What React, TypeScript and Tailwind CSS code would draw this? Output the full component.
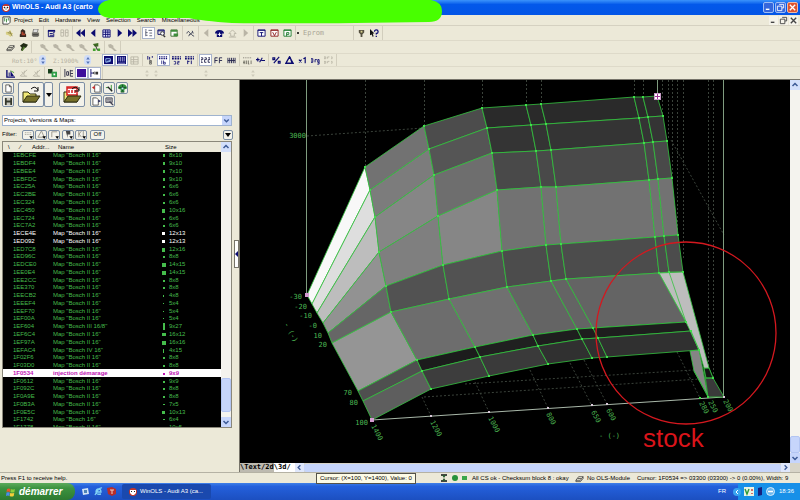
import type { ReactNode } from "react";
import clsx from "clsx";

type Point = [number, number];

const NAVY = "#0b0b70";
const GRAY = "#b9b5a6";

const icons: Record<string, ReactNode> = {
  stamp: <><path d="M1 3h4l1-2 1 3 2 1-3 4-2-2-3-1z" fill="#d8cf85" /><path d="M5 2l3 6M3 4l4 1" stroke="#8d8446" /></>,
  bust: <><path d="M2 9V6l1-1V2l2-2 3 2v3l1 1v3z" fill="#35261f" /><path d="M4 3h2v2h2v2H4z" fill="#b04630" /></>,
  printer: <><path d="M3 0h5L7 4H2z" fill="#ddd" stroke="#555" strokeWidth=".7" /><path d="M1 4h8v4H1z" fill="#77756c" /><path d="M2 6h6M2 8h6" stroke="#333" strokeWidth=".8" /></>,
  props: <><path d="M1 1h8v2H1z" fill={NAVY} /><path d="M1.5 2v6.5h6V5M3 5h3M3 7h4M6 5l3-2" stroke={NAVY} fill="none" /></>,
  panes: <path d="M1 1h3v7H1zM6 1h3v7H6zM1 4h3M6 4h3" stroke={GRAY} fill="none" />,
  first: <path d="M5 0v9L0 4.5zM10 0v9L5 4.5z" fill={NAVY} />,
  prev: <path d="M7 0v9L2 4.5z" fill={NAVY} />,
  grid: <><path d="M1 1h8v8H1z" fill="#e8e8ff" stroke={NAVY} /><path d="M4 1v8M6.5 1v8M1 3.5h8M1 6h8" stroke={NAVY} /></>,
  next: <path d="M3 0v9l5-4.5z" fill={NAVY} />,
  last: <path d="M0 0v9l5-4.5zM5 0v9l5-4.5z" fill={NAVY} />,
  tree: <path d="M1 1h2M2 2v6M2 4h2M2 7h2M5 1.5h4M6 4.5h3M6 7.5h3" stroke="#555a70" fill="none" />,
  find: <><path d="M1 1h7v5H1z" fill="#ddd" stroke={NAVY} /><path d="M1 2h7" stroke={NAVY} /><circle cx="6" cy="5" r="2" fill="#fff" stroke="#333" /><path d="M7 7l2 2" stroke="#333" strokeWidth="1.5" /></>,
  doc: <><path d="M1 1h7v7H1z" fill="#fff" stroke="#3c6d30" /><path d="M1 1h7v2H1zM4 5h5v3H4z" fill="#3f8e3a" /></>,
  curves: <path d="M1 5q1-4 3-1t3-1M3 8q1-4 3-2t3 2M7 2l1 3" stroke="#3b3f55" fill="none" />,
  prevOff: <path d="M7 0v9L2 4.5z" fill={GRAY} />,
  home: <><path d="M0 5q0-4 5-4t5 4H8v4H2V5z" fill={NAVY} /><path d="M3 6h4M5 4v4" stroke="#fff" /></>,
  homeOff: <path d="M1 5l4-4 4 4H7v3H3V5zM1 9h8" fill="none" stroke={GRAY} />,
  nextOff: <path d="M3 0v9l5-4.5z" fill={GRAY} />,
  boxT: <><path d="M1 1h8v7H1z" fill="#fff" stroke={NAVY} /><path d="M1 1.5h8M3 4h4M5 4v4" stroke={NAVY} /></>,
  boxV: <><path d="M1 1h8v7H1z" fill="#fff" stroke="#8c1e1e" /><path d="M1 1.5h8M3 3.5l2 4 2-4" stroke="#8c1e1e" fill="none" /></>,
  boxP: <><path d="M1 1h8v7H1z" fill="#fff" stroke="#1e7a2c" /><path d="M1 1.5h8M4 8V4h2.5v2H4" stroke="#1e7a2c" fill="none" /></>,
  lamp: <><path d="M2 1h6v3L6 6v3H4V6L2 4z" fill="#55513f" /><path d="M4 2h2v2H4z" fill="#d9d28c" /></>,
  help: <><path d="M0 0l5 5H3l1 3-1 1-1-3-2 1z" fill="#111" /><path d="M5 3q0-2 2-2t2 2-2 2v1M7 7.5V9" stroke={NAVY} strokeWidth="1.4" fill="none" /></>,
  eraser: <path d="M1 7l3-4h5L6 7zM1 7v1.5h5L9 5V3M3 5h4" stroke="#333" strokeWidth=".8" fill="none" />,
  wand: <><path d="M1 3l4-3 5 2-2 3-3 1-1 3-2-1 1-3z" fill="#222c16" /><path d="M3 8l2-4 2 1-3 4z" fill="#4f7a2c" /></>,
  tool: <path d="M0 2l3-1 3 2v2l4 4H7L4 6 1 5z" fill={GRAY} />,
  toolGo: <><path d="M1 1l6-1v4H3z" fill="#3d6b22" /><path d="M1 6h3v3H1zM6 6h3v3H6z" fill="#43a22f" /><path d="M4 3l2 5" stroke="#222" /></>,
  view3d: <><path d="M0 0h10v9H0z" fill={NAVY} /><path d="M2 7V3h5v3zM3 6l4-1" stroke="#9ec6f5" fill="none" /></>,
  view2d: <><path d="M0 0h10v9H0z" fill={NAVY} /><path d="M2 1v5M4 1v5M6 1v5M8 1v5M1 8h8" stroke="#c6c6f0" strokeWidth=".8" /></>,
  viewOff: <path d="M1 1h8v8H1zM1 4h8M1 6.5h8M4 1v8" stroke={GRAY} fill="none" />,
  bit8: <><path d="M2 0v4M4 1v3M7 0v2" stroke={NAVY} /><path d="M4 5h2v1.5H4zM4 7h2v2H4z" stroke="#333" strokeWidth=".7" fill="none" /></>,
  bit16: <><path d="M0 1h10M0 3h10" stroke={NAVY} strokeWidth="1.4" strokeDasharray="1.5 1" /><path d="M3 5v4M5 5v4h2V7H5" stroke={NAVY} strokeWidth=".8" fill="none" /></>,
  bit32: <><path d="M0 1h10M0 3h10" stroke={NAVY} strokeWidth="1.5" strokeDasharray="2 1" /><path d="M2 6h2v3H2M6 6h2v1H6v2h2" stroke={NAVY} strokeWidth=".8" fill="none" /></>,
  bitF: <><path d="M0 1h10M0 3h10" stroke={NAVY} strokeWidth="1.5" strokeDasharray="2 1" /><path d="M3 5v4M3 6h2M7 5v4" stroke={NAVY} fill="none" /></>,
  dec: <path d="M0 2h2v2H0v3h2M4 2h2v2H4v3h2M8 2h2v2H8v3h2" stroke="#26264e" fill="none" />,
  hex: <path d="M1 8V2h3M1 5h3M6 8V2h3M6 5h3" stroke="#26264e" fill="none" />,
  bin: <path d="M1 2v6M3 2v6M5 2v6M7 2v6M9 2v6M1 5h8" stroke="#26264e" fill="none" />,
  hilo: <><path d="M0 2h10" stroke="#77746a" strokeDasharray="1 1" /><path d="M0 5v4M2 5v4M0 7h2M4 5v4M6 5v4h1M9 5v4" stroke="#55534a" strokeWidth=".8" fill="none" /></>,
  sign: <path d="M0 4h4M2 2v4M4 7l3-5M6 5h4" stroke={NAVY} strokeWidth="1.2" />,
  percent: <path d="M1 2h2v2H1zM7 6h2v2H7zM8 1L2 8" stroke={NAVY} strokeWidth="1.3" fill="none" />,
  delta: <path d="M5 1L1 8h8zM5.5 1l2.500 7" stroke={NAVY} strokeWidth="1.5" fill="none" />,
  times: <path d="M1 4l3 3M4 4L1 7M6 3l2-1v6" stroke={NAVY} strokeWidth="1.3" fill="none" />,
  org: <path d="M0 3h2v4H0zM4.5 7V4h2M7.5 4H9v3H7.500zM9 7v2H7" stroke={NAVY} fill="none" />,
  orgOff: <path d="M0 1h2v2H0zM4 3V1h2M8 1h1v2H8M0 6h2v2H0zM4 8V6h2M8 6h1v2H8" stroke={GRAY} fill="none" />,
  chart: <><path d="M1 1v8h9" stroke={NAVY} strokeWidth="1.5" fill="none" /><path d="M3 8V4h1v4M5 8V2l4 6z" fill={NAVY} /><path d="M5 2l4 2" stroke="#4a9b2e" /></>,
  chartOff: <path d="M1 8l8-7M3 3l4 5M2 8h7M6 2v3" stroke={GRAY} fill="none" />,
  squares: <><path d="M0 0h5v5H0z" fill="#173f1b" /><path d="M4 3h6v6H4z" fill="#2e9e46" /><path d="M6 5h2v2H6z" fill="#fff" /></>,
  align: <path d="M1 0v9M3 3h2v4H3zM7 1v7M7 2h3M7 5h3M7 8h3" stroke="#2b2b45" fill="none" />,
  purple: <path d="M0 0h10v9H0z" fill="#3d0f9c" />,
  left: <><path d="M1 0v9M1 4.5h3" stroke={NAVY} /><path d="M3 4.5l2-2v4zM6 3h3v3H6z" fill="#333" /></>,
  newDoc: <path d="M2 1h4l2 2v6H2zM6 1v2h2" fill="#fff" stroke="#333" strokeWidth=".8" />,
  save: <><path d="M1 1h8v8H1z" fill="#35382c" /><path d="M3 1h4v3H3zM3 6h4v3H3z" fill="#c8c8c0" /></>,
  docBack: <><path d="M3 1h4l2 2v6H3z" fill="#fff" stroke="#333" strokeWidth=".8" /><path d="M0 4l3-2v4z" fill="#c22" /></>,
  pen: <><path d="M1 4h3M7 1v7" stroke="#2e8c2e" /><path d="M3 3l5 5" stroke="#222" strokeWidth="1.5" /></>,
  globe: <><path d="M0 5q0-4 5-5 5 1 5 5l-3 1v3H3V6z" fill="#2f8f3e" /><path d="M1 4h8M5 1v7M3 9h4" stroke="#164c28" /><path d="M4 4h2v2H4z" fill="#bfe8ff" /></>,
  docNext: <><path d="M1 1h4l2 2v6H1z" fill="#fff" stroke="#333" strokeWidth=".8" /><path d="M7 6l3-1.5L7 3z" fill="#225" /></>,
  db: <><path d="M1 1h7v5H1z" fill="#ccc" stroke="#445" /><path d="M2 2.5h5M2 4.5h5" stroke="#445" strokeWidth=".7" /><path d="M5 5l4 4" stroke="#445" strokeWidth="1.5" /></>,
  minus: <path d="M2 7h4" stroke="currentColor" strokeWidth="1.5" />,
  restore: <path d="M3.5 1.5h5v4h-2M1.5 3.5h5v5h-5z" stroke="currentColor" fill="none" />,
  close: <path d="M2 2l6 6M8 2L2 8" stroke="currentColor" strokeWidth="1.5" />,
  up: <path d="M2.5 6L5 3.500 7.500 6" stroke="#3d5a96" strokeWidth="1.5" fill="none" />,
  down: <path d="M2.5 4L5 6.500 7.500 4" stroke="#3d5a96" strokeWidth="1.5" fill="none" />,
  chevL: <path d="M6 2.5L3.500 5 6 7.500" stroke="#3d5a96" strokeWidth="1.5" fill="none" />,
  chevR: <path d="M4 2.5L6.500 5 4 7.500" stroke="#3d5a96" strokeWidth="1.5" fill="none" />,
};

const Icon = ({ name, className }: { name: string; className?: string }) => (
  <svg viewBox="0 0 10 10" className={clsx("shrink-0", className ?? "size-[9px]")} aria-hidden="true">
    {icons[name]}
  </svg>
);

const ToolGroup = ({ names, pressed = [] }: { names: string[]; pressed?: string[] }) => (
  <div className="flex h-full items-center border-r border-[#d2cebd] px-px">
    {names.map((name, i) => (
      <button
        key={i}
        aria-label={name}
        className={clsx(
          "flex h-[12px] w-[13px] items-center justify-center",
          pressed.includes(name) && "border border-[#a9b4cc] bg-white"
        )}
      >
        <Icon name={name} />
      </button>
    ))}
  </div>
);

const Spinner = ({ faint }: { faint?: boolean }) => (
  <button
    aria-label="Step"
    className={clsx("flex h-[10px] w-[7px] items-center justify-center rounded-sm", faint ? "opacity-60" : "bg-[#cfdcf8]")}
  >
    <svg viewBox="0 0 6 10" className="h-[9px] w-[6px]">
      <path d="M1 4l2-3 2 3zM1 6l2 3 2-3z" fill={faint ? "#bbb7a6" : "#5573b5"} />
    </svg>
  </button>
);

const menus = ["Project", "Edit", "Hardware", "View", "Selection", "Search", "Miscellaneous"];

const TitleBar = () => (
  <header className="relative">
    <div className="flex h-[15px] items-center bg-linear-to-b from-[#3b93fb] via-[#0358ea] via-30% to-[#0355e6] px-[2px] text-white">
      <svg viewBox="0 0 8 8" className="size-[8px]">
        <circle cx="4" cy="4" r="4" fill="#c3392d" />
        <path d="M1 2h6v3L5 7H3L1 5z" fill="#fff" />
        <path d="M2 3h1v1H2zM5 3h1v1H5zM3 5h2" fill="#222" stroke="#222" strokeWidth=".5" />
      </svg>
      <h1 className="ml-[2px] flex-1 text-[7px] font-bold">WinOLS - Audi A3 (carto</h1>
      <div className="flex gap-px">
        <button aria-label="Minimize" className="rounded-xs border border-[#9dbdf5] bg-[#3667dc]"><Icon name="minus" /></button>
        <button aria-label="Restore" className="rounded-xs border border-[#9dbdf5] bg-[#3667dc]"><Icon name="restore" /></button>
        <button aria-label="Close" className="rounded-xs border border-[#f0b9a5] bg-[#dd5430]"><Icon name="close" /></button>
      </div>
    </div>
    <nav className="flex h-[11px] items-center border-b border-[#d5d1c1] px-[2px]">
      <svg viewBox="0 0 10 10" className="size-[9px]">
        <path d="M1 1h8v6L7 9H1z" fill="#fff" stroke="#333" />
        <path d="M3 2v4M5 3v4M7 2v3" stroke="#3a8a3c" />
      </svg>
      <ul className="ml-[3px] flex flex-1 gap-[6px] text-[6px]">
        {menus.map((m) => (
          <li key={m}><button>{m}</button></li>
        ))}
      </ul>
      <div className="flex gap-px text-[#444]">
        <button aria-label="Minimize map" className="bg-[#f5f3ea]"><Icon name="minus" /></button>
        <button aria-label="Restore map" className="bg-[#f5f3ea]"><Icon name="restore" /></button>
        <button aria-label="Close map" className="bg-[#f5f3ea]"><Icon name="close" /></button>
      </div>
    </nav>
    <svg viewBox="0 0 346 24" className="absolute top-0 left-[97px] h-[24px] w-[346px]">
      <path d="M12 0H334Q345 2 345 11Q345 22 332 22Q215 24 135 23Q105 21 92 18L12 18Q1 16 1 9Q2 2 12 0z" fill="#48ff00" />
    </svg>
  </header>
);

const Toolbars = () => (
  <div className="border-b border-[#77746a]">
    <div className="flex h-[14px] items-center pl-[2px]">
      <ToolGroup names={["stamp", "bust", "printer"]} />
      <ToolGroup names={["props", "panes"]} />
      <ToolGroup names={["first", "prev", "grid", "next", "last"]} />
      <ToolGroup names={["tree", "find", "doc"]} pressed={["tree"]} />
      <ToolGroup names={["curves"]} />
      <ToolGroup names={["prevOff", "home", "homeOff", "nextOff"]} />
      <ToolGroup names={["boxT", "boxV", "boxP"]} />
      <span className="mx-px size-[2px] rounded-full bg-black" />
      <span className="ml-[3px] w-[50px] font-['DejaVu_Sans_Mono',monospace] text-[7px] text-[#aaa696]">Eprom</span>
      <div className="h-full border-l border-[#d2cebd]"><ToolGroup names={["lamp", "help"]} /></div>
    </div>
    <div className="flex h-[13px] items-center border-t border-[#dedac9] pl-[3px]">
      <ToolGroup names={["eraser", "wand"]} />
      <div className="ml-[5px] flex h-full"><ToolGroup names={["tool", "tool", "tool", "tool", "toolGo"]} /></div>
      <ToolGroup names={["tool"]} />
    </div>
    <div className="flex h-[13px] items-center border-t border-[#dedac9] pl-[3px]">
      <div className="flex w-[98px] items-center pl-[9px] font-['DejaVu_Sans_Mono',monospace] text-[6px] text-[#b5b1a1]">
        <span className="w-[27px]">Rot:10°</span>
        <Spinner />
        <span className="ml-[7px] w-[31px]">Z:1900%</span>
        <Spinner />
      </div>
      <ToolGroup names={["view3d", "view2d", "viewOff"]} pressed={["view3d", "view2d"]} />
      <ToolGroup names={["bit8", "bit16", "bit32", "bitF"]} pressed={["bit16"]} />
      <ToolGroup names={["dec", "hex", "bin"]} pressed={["dec"]} />
      <ToolGroup names={["hilo", "sign"]} />
      <ToolGroup names={["percent", "delta", "times", "org", "orgOff"]} />
    </div>
    <div className="flex h-[13px] items-center border-t border-[#dedac9] pl-[3px]">
      <ToolGroup names={["chart", "chartOff", "chartOff"]} />
      <ToolGroup names={["squares"]} />
      <ToolGroup names={["align", "purple", "left"]} pressed={["purple", "left"]} />
      <div className="ml-[40px] flex gap-[2px]"><Spinner faint /><Spinner faint /></div>
      <div className="ml-[43px]"><Spinner faint /></div>
      <div className="ml-[40px]"><Spinner faint /></div>
    </div>
  </div>
);

// address, name, size; the marker dimensions follow the size column
const maps: [string, string, string][] = [
  ["1EBCFE", 'Map "Bosch II 16"', "8x10"],
  ["1EBDF4", 'Map "Bosch II 16"', "9x10"],
  ["1EBEE4", 'Map "Bosch II 16"', "7x10"],
  ["1EBFDC", 'Map "Bosch II 16"', "9x10"],
  ["1EC25A", 'Map "Bosch II 16"', "6x6"],
  ["1EC2BE", 'Map "Bosch II 16"', "6x6"],
  ["1EC324", 'Map "Bosch II 16"', "6x6"],
  ["1EC450", 'Map "Bosch II 16"', "10x16"],
  ["1EC724", 'Map "Bosch II 16"', "6x6"],
  ["1EC7A2", 'Map "Bosch II 16"', "6x6"],
  ["1ECE4E", 'Map "Bosch II 16"', "12x13"],
  ["1ED092", 'Map "Bosch II 16"', "12x13"],
  ["1ED7C8", 'Map "Bosch II 16"', "12x16"],
  ["1ED96C", 'Map "Bosch II 16"', "8x8"],
  ["1EDCE0", 'Map "Bosch II 16"', "14x15"],
  ["1EE0E4", 'Map "Bosch II 16"', "14x15"],
  ["1EE2CC", 'Map "Bosch II 16"', "8x8"],
  ["1EE370", 'Map "Bosch II 16"', "8x8"],
  ["1EECB2", 'Map "Bosch II 16"', "4x8"],
  ["1EEEF4", 'Map "Bosch II 16"', "5x4"],
  ["1EEF70", 'Map "Bosch II 16"', "5x4"],
  ["1EF00A", 'Map "Bosch II 16"', "5x4"],
  ["1EF604", 'Map "Bosch III 16/8"', "9x27"],
  ["1EF6C4", 'Map "Bosch II 16"', "16x12"],
  ["1EF97A", 'Map "Bosch II 16"', "16x16"],
  ["1EFAC4", 'Map "Bosch IV 16"', "4x15"],
  ["1F02F6", 'Map "Bosch II 16"', "8x8"],
  ["1F03D0", 'Map "Bosch II 16"', "8x8"],
  ["1F0534", "injection démarage", "9x9"],
  ["1F0612", 'Map "Bosch II 16"', "9x9"],
  ["1F092C", 'Map "Bosch II 16"', "8x8"],
  ["1F0A9E", 'Map "Bosch II 16"', "8x8"],
  ["1F0B3A", 'Map "Bosch II 16"', "7x5"],
  ["1F0E5C", 'Map "Bosch II 16"', "10x13"],
  ["1F1742", 'Map "Bosch 16"', "6x4"],
  ["1F1778", 'Map "Bosch II 16"', "10x5"],
];

const SizeMark = ({ size }: { size: string }) => {
  const [w, h] = size.split("x").map((n) => Math.max(1, Math.round(Number(n) / 4)));
  return (
    <svg viewBox="0 0 6 7" className="h-[7px] w-[6px]">
      <rect x={Math.floor(3 - w / 2)} y={Math.floor(4 - h / 2)} width={w} height={h} fill="currentColor" />
    </svg>
  );
};

const MapTable = () => (
  <div className="mx-[2px] mb-[44px] flex min-h-0 flex-1 border border-[#8a877a]">
    <div className="min-w-0 flex-1 overflow-hidden bg-black">
      <table className="h-[290px] w-full table-fixed text-left text-[6px] leading-[7px]">
        <thead>
          <tr className="h-[10px] bg-[#ebe8d9] text-black">
            <th className="w-[50px] pl-[5px] font-normal whitespace-pre">\      ⁄       Addr...</th>
            <th className="w-[108px] pl-[5px] font-normal">Name</th>
            <th className="pl-[4px] font-normal">Size</th>
          </tr>
        </thead>
        <tbody>
          {maps.map(([address, name, size], i) => (
            <tr
              key={address}
              className={clsx(
                i === 28 ? "bg-white font-bold text-[#c014b4]" : i === 10 || i === 11 ? "text-white" : "text-[#45bd4c]"
              )}
            >
              <td className="p-0 pl-[10px]">{address}</td>
              <td className="p-0 whitespace-nowrap">{name}</td>
              <td className="p-0">
                <span className="flex items-center gap-[2px]"><SizeMark size={size} />{size}</span>
              </td>
            </tr>
          ))}
        </tbody>
      </table>
    </div>
    <div className="flex w-[10px] flex-col bg-[#f4f3ee]">
      <button aria-label="Scroll up" className="bg-[#d3dffb]"><Icon name="up" className="size-[10px]" /></button>
      <div className="mt-auto h-[34px] rounded-xs border border-[#b3c5f2] bg-[#c6d5fb]" />
      <button aria-label="Scroll down" className="mt-[5px] bg-[#c6d5fb]"><Icon name="down" className="size-[10px]" /></button>
    </div>
  </div>
);

const FolderIcon = ({ red }: { red?: boolean }) => (
  <svg viewBox="0 0 20 20" className="size-[20px]">
    <path d="M2 7h5l2 2h6v8H2z" fill="#f0e878" stroke="#2c2c10" />
    {red && <path d="M5 2h10v8H5z" fill="#fff" stroke="#d42020" strokeWidth="1.5" />}
    {red && <path d="M5 3h10M7 8V5M10 8V5M13 8V5" stroke="#d42020" strokeWidth="1.5" />}
    <path d="M2 17l4-6h13l-4 6z" fill="#77712a" stroke="#2c2c10" />
    <path d="M10 4q4-4 7 1M17 2v4h-4" fill="none" stroke="#111" />
  </svg>
);

const boxButton = "flex items-center justify-center rounded-xs border border-[#7d8fa5] bg-[#f3f2ea]";

const SmallButton = ({ name }: { name: string }) => (
  <button aria-label={name} className={clsx(boxButton, "size-[12px]")}>
    <Icon name={name} />
  </button>
);

const filters = [
  <path key="0" d="M1 3h8M1 5h8" stroke="#99968a" strokeDasharray="1 1" />,
  <path key="1" d="M5 1L1 8h7z" stroke="#99968a" fill="none" />,
  <path key="2" d="M2 8V2h6" stroke="#99968a" fill="none" />,
  <path key="3" d="M2 1h5v4H4v4" fill="#444" />,
  <path key="4" d="M2 1v7M2 5l3-4M2 4l3 4M7 1v7" stroke="#99968a" fill="none" />,
];

const ProjectPanel = () => (
  <aside className="flex w-[234px] shrink-0 flex-col">
    <div className="flex h-[32px] items-start gap-[4px] pt-[2px] pl-[2px]">
      <div className="flex flex-col gap-px"><SmallButton name="newDoc" /><SmallButton name="save" /></div>
      <div className="flex">
        <button aria-label="Open project" className={clsx(boxButton, "h-[25px] w-[26px]")}><FolderIcon /></button>
        <button aria-label="Recent projects" className={clsx(boxButton, "h-[25px] w-[9px]")}>
          <svg viewBox="0 0 6 4" className="h-[4px] w-[6px]"><path d="M0 0h6L3 4z" /></svg>
        </button>
      </div>
      <button aria-label="Open map pack" className={clsx(boxButton, "ml-[2px] h-[25px] w-[26px]")}><FolderIcon red /></button>
      <div className="ml-px grid grid-cols-3 gap-px">
        <SmallButton name="docBack" /><SmallButton name="pen" /><SmallButton name="globe" />
        <SmallButton name="docNext" /><SmallButton name="db" />
      </div>
    </div>
    <div className="relative mx-[2px] mt-[3px] flex h-[11px] shrink-0">
      <select aria-label="View" className="block h-[11px] w-full appearance-none border border-[#9fb3cf] bg-white pl-px text-[6px] leading-[9px]">
        <option>Projects, Versions &amp; Maps:</option>
      </select>
      <span className="pointer-events-none absolute top-px right-px bg-[#c6d5fb]"><Icon name="down" /></span>
    </div>
    <div className="mt-[2px] flex h-[13px] items-center gap-px pl-[2px] text-[6px]">
      <span className="w-[19px]">Filter:</span>
      {filters.map((shape, i) => (
        <button key={i} aria-label={`Filter ${i + 1}`} className={clsx(boxButton, "h-[10px] w-[12px]", i === 3 && "ml-px")}>
          <svg viewBox="0 0 10 10" className="size-[9px]">{shape}<path d="M6 7h4l-2 3z" /></svg>
        </button>
      ))}
      <button className={clsx(boxButton, "ml-[2px] h-[10px] w-[15px]")}>Off</button>
      <button aria-label="More filters" className={clsx(boxButton, "mr-px ml-auto size-[10px]")}>
        <svg viewBox="0 0 6 4" className="h-[4px] w-[6px]"><path d="M0 0h6L3 4z" /></svg>
      </button>
    </div>
    <MapTable />
  </aside>
);

// mesh vertices, one line per row of the map (y axis), one entry per column (x axis)
const mesh: Point[][] = [
  [[307, 295], [365, 167], [424, 126], [482, 108], [526, 105], [541, 104], [634, 97], [643, 97], [657, 96]],
  [[312, 304], [370, 190], [429, 149], [487, 128], [531, 125], [546, 124], [639, 118], [648, 117], [663, 116]],
  [[317, 313], [375, 217], [434, 175], [492, 153], [536, 151], [551, 150], [644, 143], [653, 142], [667, 141]],
  [[323, 323], [379, 252], [438, 216], [497, 190], [541, 187], [556, 187], [649, 180], [658, 179], [672, 178]],
  [[328, 333], [386, 286], [443, 265], [502, 251], [546, 245], [561, 244], [655, 237], [664, 236], [678, 235]],
  [[332, 343], [391, 312], [449, 299], [507, 287], [551, 281], [566, 279], [659, 273], [669, 272], [683, 272]],
  [[358, 391], [417, 360], [475, 347], [533, 335], [577, 329], [593, 328], [686, 322]],
  [[363, 401], [422, 371], [480, 357], [538, 346], [582, 339], [598, 338], [691, 331]],
  [[372, 420], [431, 389], [489, 376], [548, 364], [592, 358], [607, 357], [699, 350]],
];

const shades = [
  ["#f8f8f8", "#727272", "#4c4c4c", "#2a2a2a"],
  ["#dedede", "#7c7c7c", "#555555", "#343434"],
  ["#bdbdbd", "#868686", "#6e6e6e", "#494949"],
  ["#929292", "#7f7f7f", "#868686", "#727272"],
  ["#666666", "#525252", "#525252", "#4c4c4c"],
  ["#959595", "#6d6d6d", "#707070", "#646464"],
  ["#4f4f4f", "#1c1c1c", "#202020", "#1e1e1e"],
  ["#5e5e5e", "#3d3d3d", "#3a3a3a", "#303030"],
];

const toPoints = (pts: Point[]) => pts.map((p) => p.join(",")).join(" ");

const rowLabels: [string, number, number][] = [
  ["-30", 302, 299], ["-20", 307, 309], ["-10", 312, 318], ["-0", 317, 328], ["10", 322, 338],
  ["20", 327, 347], ["70", 352, 395], ["80", 358, 405], ["100", 368, 425],
];

const columnLabels: [string, number, number][] = [
  ["1400", 371, 426], ["1200", 430, 422], ["1000", 488, 418], ["800", 546, 414],
  ["650", 591, 412], ["600", 606, 410], ["280", 699, 403], ["250", 708, 402], ["200", 723, 401],
];

const MapChart = () => (
  <svg viewBox="240 80 550 383" className="min-h-0 w-full flex-1 bg-black" role="img" aria-label="3d view of the map">
    <g stroke="#3a423a" strokeDasharray="2 2" fill="none">
      <path d="M365.5 80V166M424.5 80V126M482.5 80V108M526.5 80V105M541.5 80V104M634.5 80V97M643.5 80V97" />
      <path d="M662.5 80V116M668.5 80V140M672.5 80V178M677.5 80V235M683.5 80V260M708.5 80V368M713.5 80V377" />
      <path d="M307 136L424 128M671 140L724 235" />
      <path d="M424 397L700 379M465 384L694 370M422 397L431 416M475 382L489 412M530 370L548 408M570 363L592 406M584 360L607 404M677 352L700 398" />
    </g>
    <g stroke="#7f9c7f" fill="none">
      <path d="M306.5 80V295M657.5 80V96M723.5 80V397" />
      <path d="M372 420L724 397" stroke="#a9b8a9" />
    </g>
    <g stroke="#35c440" strokeWidth=".8" strokeLinejoin="round">
      {shades.map((row, i) =>
        mesh[i].slice(1).map((_, j) => {
          const below = mesh[i + 1];
          if (!below[j + 1]) return null;
          return (
            <polygon
              key={`${i}-${j}`}
              points={toPoints([mesh[i][j], mesh[i][j + 1], below[j + 1], below[j]])}
              fill={row[Math.min(j, 3)]}
            />
          );
        })
      )}
      <polygon points="690,351 699,350 708,396 694,371" fill="#858585" />
      <polygon points="704,368 709,368 713,378 724,397 708,397" fill="#3a3a3a" />
      <polygon points="704,368 709,368 713,378 706,378" fill="#151515" />
      <polygon points="659,273 683,272 709,368 704,368 699,350 686,322" fill="#bdbdbd" />
      <path d="M669 272L686 322M691 331L699 350M706 378L713 378M694 371L708 397" fill="none" />
    </g>
    <g fill="#3fe04a">
      {mesh.flatMap((row, i) =>
        row.slice(1).map(([x, y], j) => <rect key={`${i}-${j}`} x={x - 1} y={y - 1} width="2" height="2" />)
      )}
      {[[708, 397], [700, 398], [713, 378]].map(([x, y]) => (
        <rect key={x} x={x - 1} y={y - 1} width="2" height="2" />
      ))}
    </g>
    <g fill="#d9c9d9">
      {[[431, 416], [489, 412], [548, 408], [592, 405], [607, 404], [724, 397]].map(([x, y]) => (
        <rect key={x} x={x - 1} y={y - 1} width="2" height="2" />
      ))}
    </g>
    <path d="M305 293h4v4h-4zM370 418h4v4h-4z" fill="#d49bd0" />
    <rect x="654.5" y="93.5" width="6" height="6" fill="#fff" stroke="#c79ac7" />
    <path d="M657.5 94v5M655 96.5h5" stroke="#a03398" />
    <g fill="#4db853" className="font-['DejaVu_Sans_Mono',monospace] text-[7px]">
      <text x="306" y="138" textAnchor="end">3000</text>
      {rowLabels.map(([text, x, y]) => (
        <text key={text} x={x} y={y} textAnchor="end">{text}</text>
      ))}
      {columnLabels.map(([text, x, y]) => (
        <text key={text} transform={`translate(${x} ${y}) rotate(62)`}>{text}</text>
      ))}
      <text x="599" y="438">- (-)</text>
      <text transform="translate(284 324) rotate(62)">- (-)</text>
    </g>
    <ellipse cx="686" cy="333" rx="90" ry="91" fill="none" stroke="#d4181f" strokeWidth="1.3" />
    <text x="643" y="447" fill="#d9141a" className="text-[26px]">stock</text>
  </svg>
);

const ChartPane = () => (
  <main className="flex min-w-0 flex-1 flex-col">
    <div className="flex min-h-0 flex-1">
      <div className="flex min-w-0 flex-1 flex-col"><MapChart /></div>
      <div className="flex w-[10px] flex-col bg-[#f4f3ee]">
        <button aria-label="Scroll chart up" className="bg-[#d3dffb]"><Icon name="up" className="size-[10px]" /></button>
        <div className="mt-auto h-[17px] rounded-xs border border-[#b3c5f2] bg-[#c6d5fb]" />
        <button aria-label="Scroll chart down" className="bg-[#c6d5fb]"><Icon name="down" className="size-[10px]" /></button>
      </div>
    </div>
    <div className="flex h-[9px] items-center bg-[#d8d5c8]">
      <div role="tablist" className="flex h-full w-[55px] bg-[#bdbab0] font-['DejaVu_Sans_Mono',monospace] text-[7px] leading-[9px] font-bold">
        <button role="tab">\Text</button>
        <button role="tab">/2d</button>
        <button role="tab" aria-selected="true" className="flex-1 bg-white text-left">\3d/</button>
      </div>
      <button aria-label="Scroll left" className="bg-[#dfe7fb]"><Icon name="chevL" /></button>
      <div className="h-[8px] flex-1 rounded-xs bg-[#c6d5fb]" />
      <button aria-label="Scroll right" className="mr-[10px] bg-[#dfe7fb]"><Icon name="chevR" /></button>
    </div>
  </main>
);

const StatusBar = () => (
  <div className="relative flex h-[11px] shrink-0 items-center border-t border-[#b5b2a4] pr-[5px] pl-px text-[6px] whitespace-nowrap">
    <span className="flex-1">Press F1 to receive help.</span>
    <svg viewBox="0 0 28 8" className="mr-[3px] h-[8px] w-[28px]">
      <path d="M0 1h6M0 7h6" stroke="#111" strokeWidth="1.5" />
      <path d="M1 1h4L3 4l2 3H1l2-3z" fill="#2a5a30" />
      <circle cx="14" cy="4" r="3" fill="#26913a" />
      <path d="M21 2h5v4h-5z" fill="#3aa64a" />
    </svg>
    <span className="w-[103px]">All CS ok - Checksum block 8 : okay</span>
    <Icon name="eraser" />
    <span className="ml-[3px] w-[50px]">No OLS-Module</span>
    <span className="w-[158px]">Cursor: 1F0534 =&gt; 03300 (03300) -&gt; 0 (0.00%), Width: 9</span>
    <div role="tooltip" className="absolute top-0 left-[316px] border border-[#55534a] bg-[#fdfbe6] px-[3px] leading-[9px]">
      Cursor: (X=100, Y=1400), Value: 0
    </div>
  </div>
);

const Taskbar = () => (
  <footer className="flex h-[17px] shrink-0 items-stretch bg-linear-to-b from-[#3f7fe8] via-[#2460dc] via-20% to-[#1c4fc0] text-white">
    <button className="flex w-[75px] items-center gap-[3px] rounded-r-lg bg-linear-to-b from-[#5cab5c] via-[#3c9340] via-30% to-[#2d7a31] pl-[6px] text-[10px] font-bold italic">
      <svg viewBox="0 0 10 10" className="size-[10px]">
        <path d="M1 2q2-1 3.500 0L4 5Q2 4 .5 5z" fill="#e8562c" />
        <path d="M5 2q2 1 4 0l-.6 3q-2 1-4 0z" fill="#8ccf3c" />
        <path d="M.5 5.6Q2 5 3.800 5.600L3.300 9Q2 8 0 9z" fill="#4b8cf0" />
        <path d="M4.3 5.7q2 1 4 0L7.700 9q-2 1-4 0z" fill="#f5cf3a" />
      </svg>
      démarrer
    </button>
    <div className="flex w-[47px] items-center gap-[4px] pl-[6px]">
      <svg viewBox="0 0 9 9" className="size-[9px]"><path d="M1 2l6-1 1 6-6 1z" fill="#cfe2f5" /><path d="M3 3h3v3H3z" fill="#4d84b8" /></svg>
      <svg viewBox="0 0 9 9" className="size-[9px]"><path d="M2 5h5Q7 2 4.500 2T2 5q0 3 5 2M1 8Q5 0 8 1" stroke="#7fd0f5" strokeWidth="1.3" fill="none" /></svg>
      <svg viewBox="0 0 9 9" className="size-[9px]"><path d="M0 1l5-1 4 2v5L5 9 1 7z" fill="#b72e2a" /><path d="M3 3h4M5 3v4" stroke="#f3cfc6" /></svg>
    </div>
    <button className="my-px flex w-[89px] items-center gap-[3px] rounded-xs bg-[#1a49ae] pl-[7px] text-[6px]">
      <svg viewBox="0 0 8 8" className="size-[8px]">
        <circle cx="4" cy="4" r="4" fill="#c3392d" />
        <path d="M1 2h6v3L5 7H3L1 5z" fill="#fff" />
        <path d="M2 3h1v1H2zM5 3h1v1H5z" fill="#222" />
      </svg>
      WinOLS - Audi A3 (ca...
    </button>
    <div className="ml-auto flex items-center gap-[12px] text-[6px]">
      <span>FR</span>
      <div className="flex h-full items-center gap-[2px] bg-[#1790e8] pr-[6px]">
        <svg viewBox="0 0 8 8" className="-ml-[5px] size-[8px]"><circle cx="4" cy="4" r="4" fill="#3aa4f0" /><path d="M5 2L3 4l2 2" stroke="#fff" fill="none" /></svg>
        <svg viewBox="0 0 10 9" className="ml-px h-[9px] w-[10px]"><path d="M0 0h10v9H0z" fill="#e9f3e4" /><path d="M1 2l2 5 2-5" stroke="#2e9a3a" strokeWidth="1.4" fill="none" /><path d="M8 2v2M8 6v1" stroke="#c33" strokeWidth="1.4" /></svg>
        <svg viewBox="0 0 8 9" className="h-[9px] w-[8px]"><path d="M2 1l4-1v8L2 9z" fill="#15207e" /></svg>
        <svg viewBox="0 0 9 9" className="size-[9px]"><circle cx="4.5" cy="4.5" r="4" fill="#6bb8ef" stroke="#d5ecfb" /><path d="M2 4.5h5" stroke="#fff" strokeWidth="1.5" /></svg>
        <span className="ml-[2px]">18:36</span>
      </div>
    </div>
  </footer>
);

export default function App() {
  return (
    <div className="flex h-screen flex-col overflow-hidden bg-[#ece9d8] font-['Liberation_Sans',Arial,sans-serif] text-black">
      <TitleBar />
      <Toolbars />
      <div className="flex min-h-0 flex-1">
        <ProjectPanel />
        <div className="flex w-[6px] shrink-0 flex-col items-start border-r border-[#77746a] pt-[160px]">
          <button aria-label="Collapse panel" className="flex h-[28px] w-[5px] items-center border border-[#77746a] bg-white">
            <svg viewBox="0 0 4 8" className="h-[8px] w-[4px]"><path d="M4 0v8L0 4z" fill={NAVY} /></svg>
          </button>
        </div>
        <ChartPane />
      </div>
      <StatusBar />
      <Taskbar />
    </div>
  );
}
